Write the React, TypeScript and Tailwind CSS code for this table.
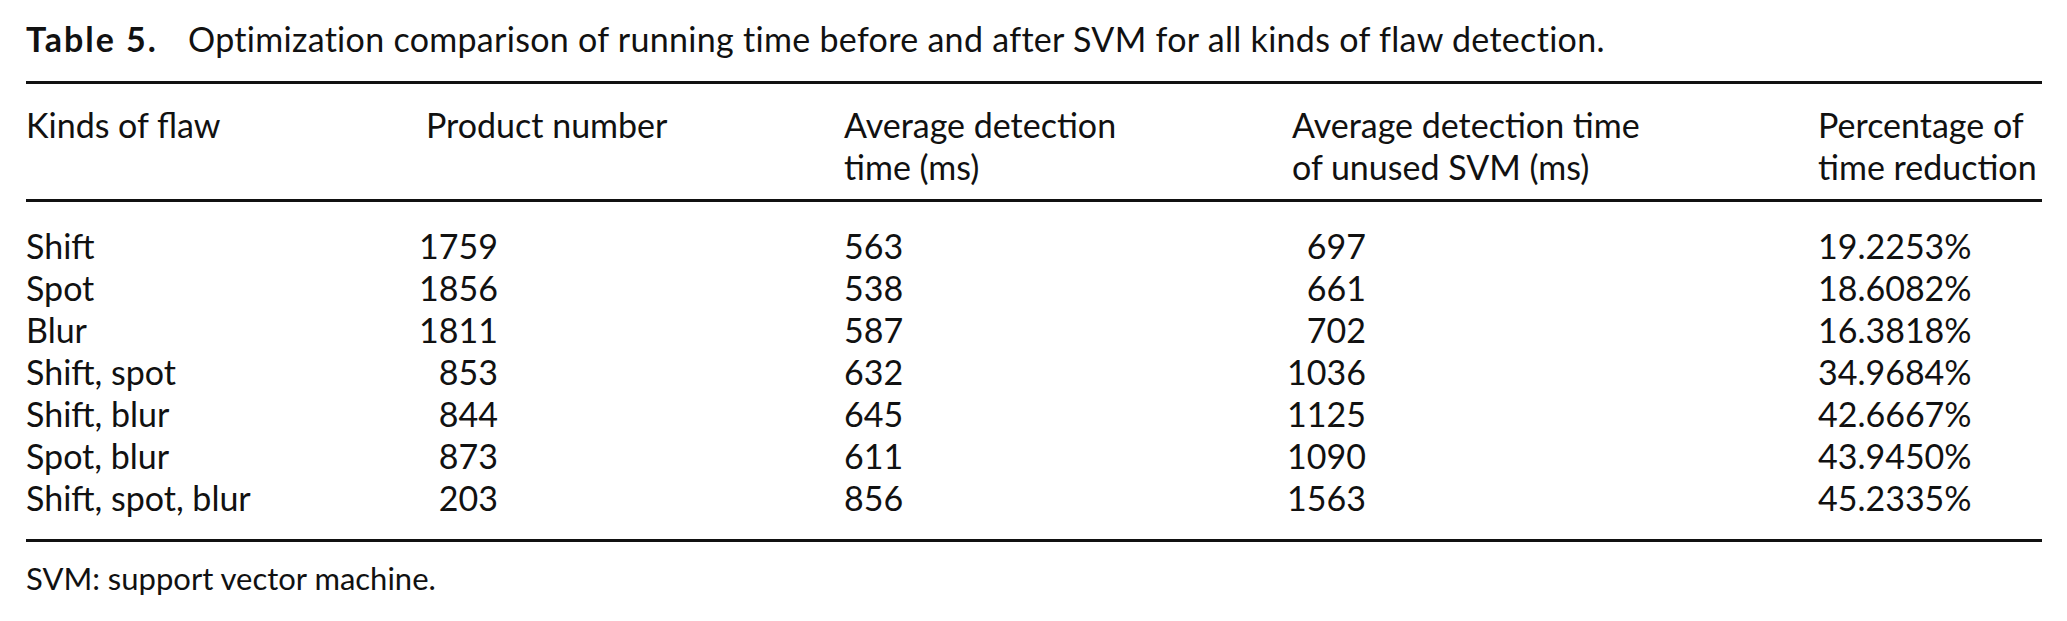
import React from "react";

const rows: [string, string, string, string, string][] = [
  ["Shift", "1759", "563", "697", "19.2253%"],
  ["Spot", "1856", "538", "661", "18.6082%"],
  ["Blur", "1811", "587", "702", "16.3818%"],
  ["Shift, spot", "853", "632", "1036", "34.9684%"],
  ["Shift, blur", "844", "645", "1125", "42.6667%"],
  ["Spot, blur", "873", "611", "1090", "43.9450%"],
  ["Shift, spot, blur", "203", "856", "1563", "45.2335%"],
];

export default function App() {
  return (
    <div
      className="bg-white text-[#111111] w-[2067px] h-[621px] pl-[26px] pr-[25px] pt-[18px] text-[34px] leading-[42px]"
      style={{ fontFamily: "Lato, 'Open Sans', sans-serif" }}
    >
      <div className="flex">
        <span className="font-bold tracking-[2px] w-[162px]">Table 5.</span>
        <span className="tracking-[0.3px]">
          Optimization comparison of running time before and after SVM for all kinds of flaw detection.
        </span>
      </div>
      <div className="mt-[21px] h-[3px] bg-[#111111]" />
      <div className="grid grid-cols-[400px_418px_448px_526px_1fr] pt-[20px] pb-[11px]">
        <div>Kinds of flaw</div>
        <div>Product number</div>
        <div>
          Average detection
          <br />
          time (ms)
        </div>
        <div>
          Average detection time
          <br />
          of unused SVM (ms)
        </div>
        <div>
          Percentage of
          <br />
          time reduction
        </div>
      </div>
      <div className="h-[3px] bg-[#111111]" />
      <div className="pt-[23px] pb-[20px]">
        {rows.map((r) => (
          <div key={r[0]} className="grid grid-cols-[400px_418px_448px_526px_1fr]">
            <div>{r[0]}</div>
            <div className="flex justify-end w-[72px] whitespace-nowrap">{r[1]}</div>
            <div>{r[2]}</div>
            <div className="flex justify-end w-[74px] whitespace-nowrap">{r[3]}</div>
            <div>{r[4]}</div>
          </div>
        ))}
      </div>
      <div className="h-[3px] bg-[#111111]" />
      <div className="pt-[15px] text-[31px]">SVM: support vector machine.</div>
    </div>
  );
}
